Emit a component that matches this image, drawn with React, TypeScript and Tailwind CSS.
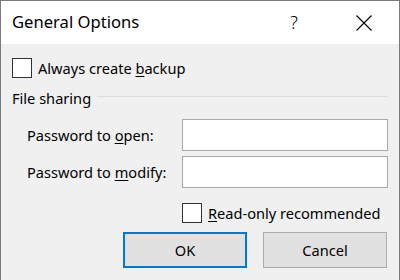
export default function App() {
  return (
    <div className="w-[400px] h-[280px] overflow-hidden border-x border-t border-[#7a7a7a] bg-[#f0f0f0] text-black flex flex-col font-['Noto_Sans',sans-serif]">
      {/* Title bar */}
      <div className="h-[43px] shrink-0 bg-white flex items-center pl-[11px]">
        <span className="text-[16.6px] leading-none">General Options</span>
        <div className="ml-auto flex h-full">
          <div className="w-[70px] h-full flex items-center justify-center text-[18px] font-light">?</div>
          <div className="w-[70px] h-full flex items-center justify-center">
            <svg width="16" height="16" viewBox="0 0 16 16">
              <path d="M0.5 0.5 L15.5 15.5 M15.5 0.5 L0.5 15.5" stroke="#000" strokeWidth="1.1" fill="none" />
            </svg>
          </div>
        </div>
      </div>

      {/* Body */}
      <div className="px-[11px] flex flex-col text-[14.6px] leading-none">
        <div className="mt-[14px] flex items-center h-5">
          <div className="w-5 h-5 border border-[#333] bg-white" />
          <span className="ml-[6px]">
            Always create <u className="underline-offset-2">b</u>ackup
          </span>
        </div>

        <div className="mt-[10px] flex items-center h-5">
          <span>File sharing</span>
          <div className="flex-1 h-px bg-[#dcdcdc] ml-[6px] mt-[-4px]" />
        </div>

        <div className="mt-[11px] flex items-center">
          <span className="ml-[15px] w-[155px]">
            Password to <u className="underline-offset-2">o</u>pen:
          </span>
          <div className="w-[206px] h-[32px] border border-[#a9a9a9] bg-white" />
        </div>
        <div className="mt-[5px] flex items-center">
          <span className="ml-[15px] w-[155px]">
            Password to <u className="underline-offset-2">m</u>odify:
          </span>
          <div className="w-[206px] h-[32px] border border-[#a9a9a9] bg-white" />
        </div>

        <div className="mt-[15px] flex items-center pl-[170px]">
          <div className="w-5 h-5 border border-[#333] bg-white" />
          <span className="ml-[6px]">
            <u className="underline-offset-2">R</u>ead-only recommended
          </span>
        </div>

        <div className="mt-[9px] flex justify-end gap-[16px] pr-px">
          <button className="w-[124px] h-[36px] bg-[#e1e1e1] border-2 border-[#0078d7] text-[14.6px]">OK</button>
          <button className="w-[124px] h-[36px] bg-[#e1e1e1] border border-[#adadad] text-[14.6px]">Cancel</button>
        </div>
      </div>
    </div>
  );
}
